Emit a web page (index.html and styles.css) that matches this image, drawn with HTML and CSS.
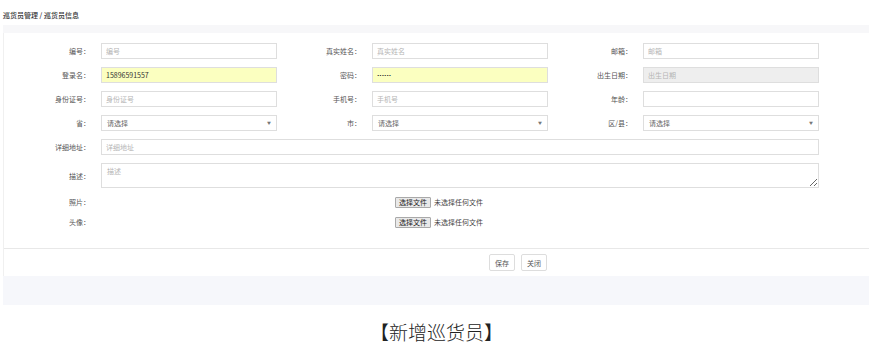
FILE: index.html
```html
<!DOCTYPE html>
<html lang="zh-CN">
<head>
<meta charset="utf-8">
<title>新增巡货员</title>
<link rel="stylesheet" href="styles.css">
</head>
<body>
<div class="crumb">巡货员管理 / 巡货员信息</div>
<div class="panel">
  <div class="panel-head"></div>
  <div class="panel-body">
    <div class="grid">
      <label class="lbl">编号：</label>
      <input class="ctl" placeholder="编号">
      <label class="lbl">真实姓名：</label>
      <input class="ctl" placeholder="真实姓名">
      <label class="lbl">邮箱：</label>
      <input class="ctl" placeholder="邮箱">

      <label class="lbl">登录名：</label>
      <input class="ctl auto" value="15896591557">
      <label class="lbl">密码：</label>
      <input class="ctl auto pwd" value="••••••">
      <label class="lbl">出生日期：</label>
      <input class="ctl" placeholder="出生日期" disabled>

      <label class="lbl">身份证号：</label>
      <input class="ctl" placeholder="身份证号">
      <label class="lbl">手机号：</label>
      <input class="ctl" placeholder="手机号">
      <label class="lbl">年龄：</label>
      <input class="ctl">

      <label class="lbl">省：</label>
      <div class="ctl sel"><span>请选择</span><span class="arrow">▼</span></div>
      <label class="lbl">市：</label>
      <div class="ctl sel"><span>请选择</span><span class="arrow">▼</span></div>
      <label class="lbl">区/县：</label>
      <div class="ctl sel"><span>请选择</span><span class="arrow">▼</span></div>

      <label class="lbl">详细地址：</label>
      <input class="ctl wide" placeholder="详细地址">

      <label class="lbl">描述：</label>
      <textarea class="ctl wide area" placeholder="描述"></textarea>

      <label class="lbl">照片：</label>
      <div class="file wide"><span class="fbtn">选择文件</span><span class="ftxt">未选择任何文件</span></div>

      <label class="lbl">头像：</label>
      <div class="file wide"><span class="fbtn">选择文件</span><span class="ftxt">未选择任何文件</span></div>
    </div>
  </div>
  <div class="panel-foot">
    <button class="btn">保存</button>
    <button class="btn">关闭</button>
  </div>
  <div class="panel-bottom"></div>
</div>
<div class="caption">【新增巡货员】</div>
</body>
</html>
```

FILE: styles.css
```css
* { box-sizing: border-box; }
body {
  margin: 0;
  background: #fff;
  font-family: "Noto Sans CJK SC", "Noto Sans", sans-serif;
  color: #555;
  font-size: 7px;
}
.crumb {
  height: 25px;
  padding: 10px 0 0 3px;
  font-size: 7px;
  line-height: 10px;
  font-weight: 500;
  color: #333;
}
.panel {
  margin-left: 3px;
  width: 866px;
  border-left: 1px solid #f0f0f0;
}
.panel-head {
  height: 8px;
  background: #f7f7f9;
  margin-left: -1px;
}
.panel-body {
  padding: 10px 0 20px 2px;
}
.grid {
  display: grid;
  grid-template-columns: 95px 176px 95px 176px 95px 176px;
  grid-template-rows: repeat(5, 16px) 25px 12px 12px;
  row-gap: 8px;
  align-items: center;
}
.lbl {
  text-align: right;
  padding-right: 11px;
  color: #555;
  font-size: 7px;
  line-height: 12px;
}
.ctl {
  height: 16px;
  border: 1px solid #dedede;
  background: #fff;
  font-family: "Noto Sans CJK SC", "Noto Sans", sans-serif;
  font-size: 7px;
  color: #333;
  padding: 0 4px;
  margin: 0;
  outline: none;
  width: 100%;
}
.ctl::placeholder { color: #b5b5b5; }
.ctl:disabled { background: #eeeeee; }
.ctl.auto { background: #fbffc0; }
.pwd { font-family: "DejaVu Sans", sans-serif; font-size: 4px; letter-spacing: 0; color: #222; }
.sel {
  display: flex;
  align-items: center;
  justify-content: space-between;
  color: #666;
  padding: 0 5px;
}
.arrow { font-size: 4px; color: #777; }
.wide { grid-column: 2 / 7; }
.area {
  height: 25px;
  padding: 2px 5px;
  resize: vertical;
}
.file {
  display: flex;
  align-items: center;
  padding-left: 294px;
  height: 11px;
}
.fbtn {
  display: inline-block;
  height: 11px;
  width: 36px;
  line-height: 9px;
  text-align: center;
  border: 1px solid #a9a9a9;
  background: #e9e9e9;
  color: #222;
  font-size: 7px;
  border-radius: 1px;
}
.ftxt {
  margin-left: 3px;
  color: #444;
  font-size: 7px;
}
.panel-foot {
  border-top: 1px solid #e8e8e8;
  padding: 5px 0 5px 485px;
  display: flex;
  gap: 6px;
}
.btn {
  height: 17px;
  width: 26px;
  padding: 0;
  border: 1px solid #ddd;
  border-radius: 2px;
  background: #fff;
  color: #555;
  font-family: "Noto Sans CJK SC", "Noto Sans", sans-serif;
  font-size: 7px;
}
.panel-bottom {
  height: 29px;
  background: #f6f7fb;
  margin-left: -1px;
}
.caption {
  margin-top: 14px;
  text-align: center;
  padding-right: 12px;
  font-family: "Noto Sans CJK SC", serif;
  font-weight: 300;
  font-size: 19px;
  line-height: 26px;
  color: #222;
}
```
